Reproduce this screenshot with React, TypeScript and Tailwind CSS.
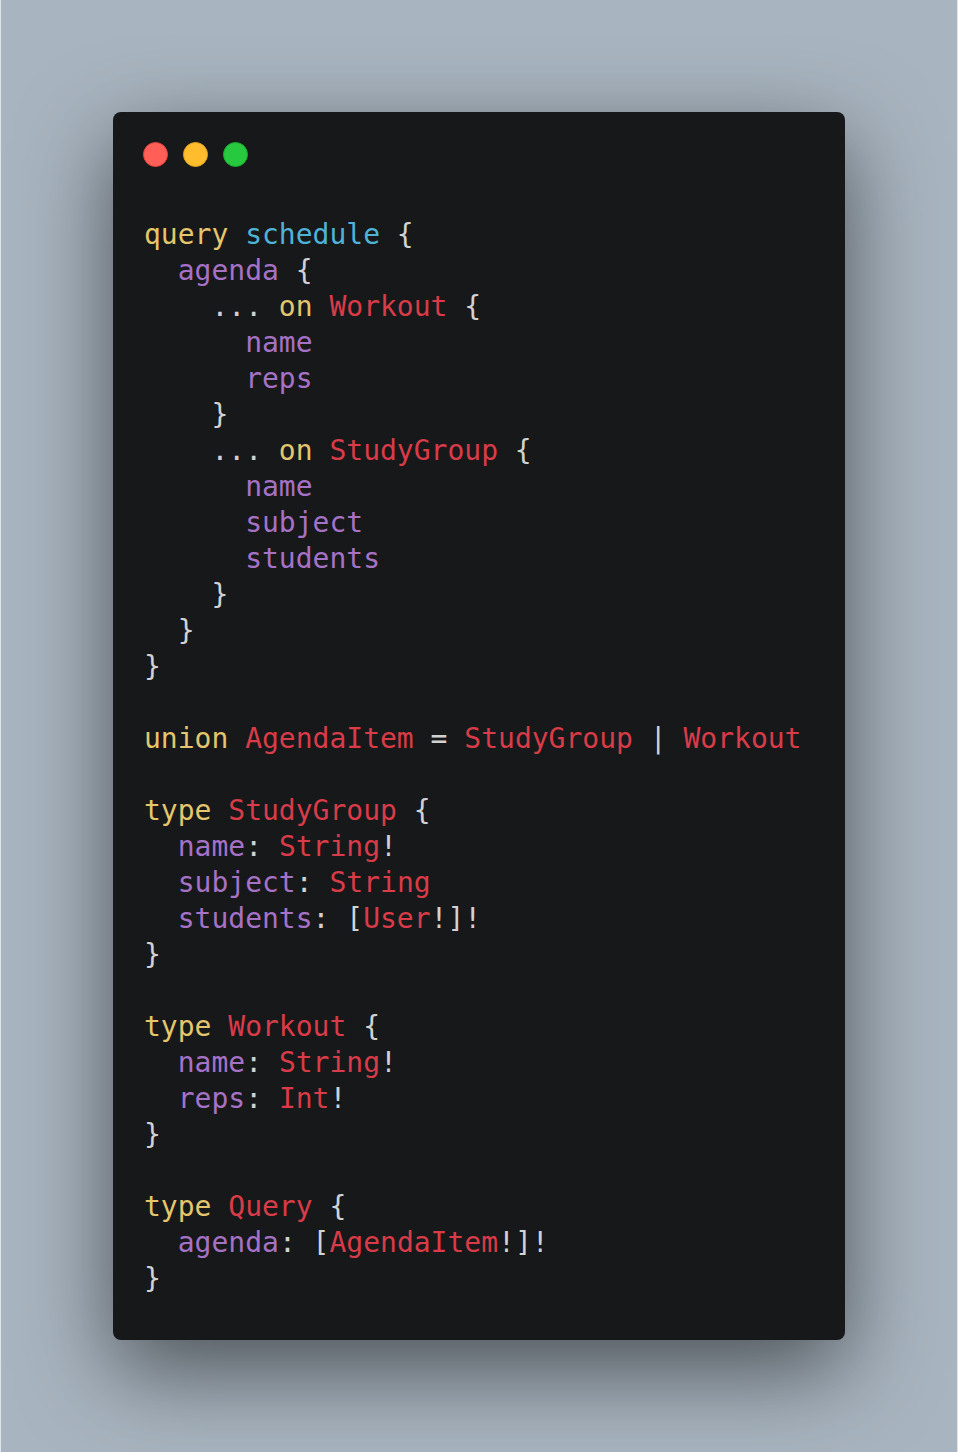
import React from 'react';

// token colours
const K = 'text-[#e5c66c]'; // keyword
const N = 'text-[#4fb3d8]'; // operation name
const F = 'text-[#a672c6]'; // field
const T = 'text-[#d93c48]'; // type
const P = 'text-[#d2d2d2]'; // punctuation

type Tok = [string, string];

const lines: Tok[][] = [
  [[K, 'query'], [P, ' '], [N, 'schedule'], [P, ' {']],
  [[P, '  '], [F, 'agenda'], [P, ' {']],
  [[P, '    ... '], [K, 'on'], [P, ' '], [T, 'Workout'], [P, ' {']],
  [[P, '      '], [F, 'name']],
  [[P, '      '], [F, 'reps']],
  [[P, '    }']],
  [[P, '    ... '], [K, 'on'], [P, ' '], [T, 'StudyGroup'], [P, ' {']],
  [[P, '      '], [F, 'name']],
  [[P, '      '], [F, 'subject']],
  [[P, '      '], [F, 'students']],
  [[P, '    }']],
  [[P, '  }']],
  [[P, '}']],
  [],
  [[K, 'union'], [P, ' '], [T, 'AgendaItem'], [P, ' = '], [T, 'StudyGroup'], [P, ' | '], [T, 'Workout']],
  [],
  [[K, 'type'], [P, ' '], [T, 'StudyGroup'], [P, ' {']],
  [[P, '  '], [F, 'name'], [P, ': '], [T, 'String'], [P, '!']],
  [[P, '  '], [F, 'subject'], [P, ': '], [T, 'String']],
  [[P, '  '], [F, 'students'], [P, ': ['], [T, 'User'], [P, '!]!']],
  [[P, '}']],
  [],
  [[K, 'type'], [P, ' '], [T, 'Workout'], [P, ' {']],
  [[P, '  '], [F, 'name'], [P, ': '], [T, 'String'], [P, '!']],
  [[P, '  '], [F, 'reps'], [P, ': '], [T, 'Int'], [P, '!']],
  [[P, '}']],
  [],
  [[K, 'type'], [P, ' '], [T, 'Query'], [P, ' {']],
  [[P, '  '], [F, 'agenda'], [P, ': ['], [T, 'AgendaItem'], [P, '!]!']],
  [[P, '}']],
];

export default function App() {
  return (
    <div className="min-h-[1452px] w-full flex justify-center py-[112px] bg-[#a8b4bf] border-x border-[#dfe4e8]">
      <div className="w-[732px] h-[1228px] rounded-lg bg-[#17181a] shadow-[0_30px_90px_rgba(0,0,0,0.55)] pl-[30px] pr-8 pt-[30px]">
        <div className="flex gap-[15px]">
          <span className="w-[25px] h-[25px] rounded-full bg-[#ff5f56] border border-[#e0443e]" />
          <span className="w-[25px] h-[25px] rounded-full bg-[#ffbd2e] border border-[#dea123]" />
          <span className="w-[25px] h-[25px] rounded-full bg-[#27c93f] border border-[#1aab29]" />
        </div>
        <pre className="mt-[50px] pl-[1px] font-['DejaVu_Sans_Mono','Liberation_Mono',monospace] text-[28px] leading-[36px] whitespace-pre">
          {lines.map((toks, i) => (
            <div key={i} className="h-[36px]">
              {toks.map(([c, s], j) => (
                <span key={j} className={c}>{s}</span>
              ))}
            </div>
          ))}
        </pre>
      </div>
    </div>
  );
}
